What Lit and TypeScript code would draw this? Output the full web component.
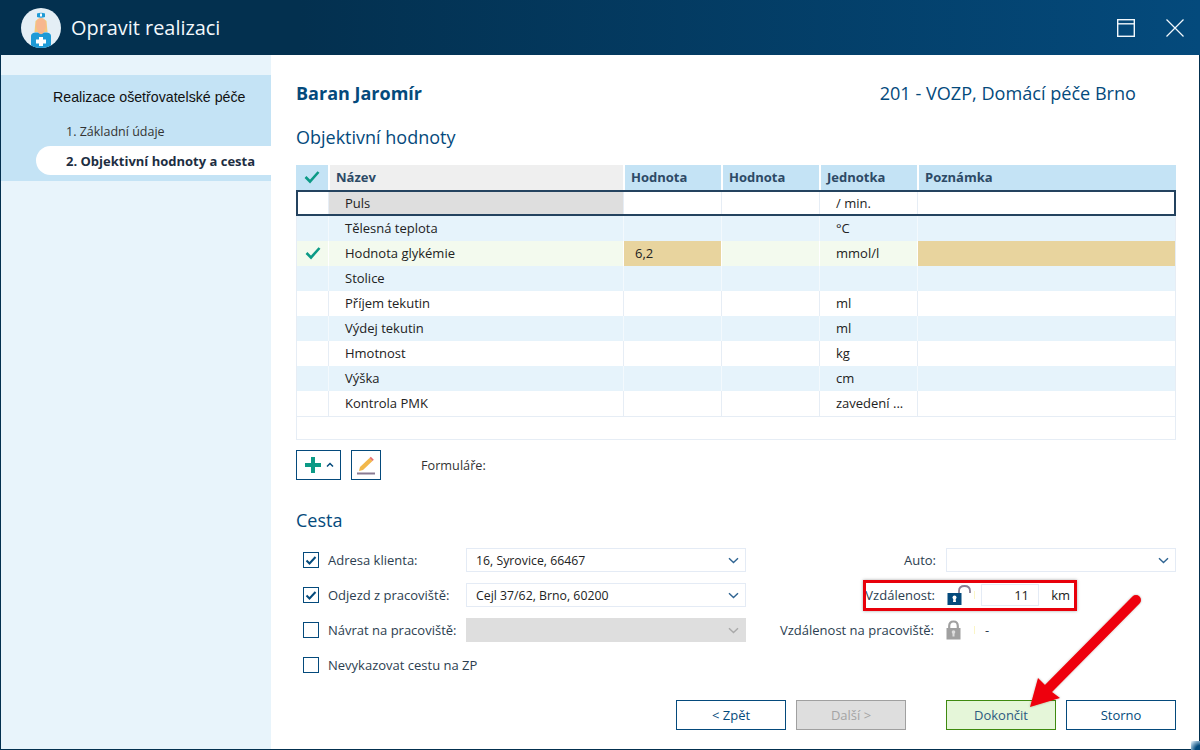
import { LitElement, html, css } from "lit";
import { customElement } from "lit/decorators.js";

const rows = [
  { n: "Puls", u: "/ min.", cls: "focus" },
  { n: "Tělesná teplota", u: "°C", cls: "alt" },
  { n: "Hodnota glykémie", u: "mmol/l", cls: "ok", v: "6,2" },
  { n: "Stolice", u: "", cls: "alt" },
  { n: "Příjem tekutin", u: "ml", cls: "" },
  { n: "Výdej tekutin", u: "ml", cls: "alt" },
  { n: "Hmotnost", u: "kg", cls: "" },
  { n: "Výška", u: "cm", cls: "alt" },
  { n: "Kontrola PMK", u: "zavedení ...", cls: "" },
];

const check = (c: string) => html`<svg class="tick" width="16" height="14" viewBox="0 0 16 14"><path d="M1.5 7 L6 11.5 L14.5 2" fill="none" stroke="${c}" stroke-width="2.6"/></svg>`;
const chev = (c = "#2f6492") => html`<svg class="chev" width="11" height="7" viewBox="0 0 11 7"><path d="M1 1.2 L5.5 5.6 L10 1.2" fill="none" stroke="${c}" stroke-width="1.4"/></svg>`;
const box = (on: boolean) => html`<span class="cb">${on ? html`<svg width="14" height="12" viewBox="0 0 14 12"><path d="M2.5 6.5 L5.5 9.5 L11.5 3" fill="none" stroke="#044a7c" stroke-width="2"/></svg>` : ""}</span>`;

@customElement("app-root")
export class AppRoot extends LitElement {
  static styles = css`
    :host { display: block; width: 1200px; height: 750px; font-family: "Open Sans", sans-serif; font-size: 13px; color: #2c3e50; position: relative; overflow: hidden; background: #fff; }
    .win { height: 750px; display: flex; flex-direction: column; box-sizing: border-box; border: 1px solid #03304f; border-top: 0; }
    .head { height: 55px; margin: 0 -1px; flex: none; background: linear-gradient(90deg, #03304f 0%, #03304f 25%, #044a7c 100%); display: flex; align-items: center; padding: 0 16px 0 21px; color: #fff; }
    .avatar { width: 40px; height: 40px; flex: none; }
    .head h1 { font-size: 19.9px; font-weight: 400; margin: 0 0 0 10px; flex: 1; color: #f2f8fc; }
    .head svg.wbtn { display: block; }
    .wbtns { display: flex; gap: 31px; align-items: center; }
    .body { flex: 1; display: flex; min-height: 0; }
    .side { width: 270px; flex: none; background: #e8f4fb; padding-top: 20px; box-sizing: border-box; }
    .sect { background: #c4e3f5; height: 106px; padding-top: 12px; box-sizing: border-box; }
    .sect .t { font-family: "Liberation Sans", sans-serif; font-size: 14.2px; color: #111; margin-left: 52px; line-height: 20px; }
    .sect .s1 { margin: 15px 0 0 65px; font-size: 12.5px; line-height: 20px; color: #333; }
    .sect .s2 { margin: 4px 0 0 35px; height: 29px; line-height: 31px; padding-left: 30px; background: #fff; border-radius: 15px 0 0 15px; font-size: 13px; font-weight: 700; color: #1d2e42; }
    .main { flex: 1; padding: 0 23px 0 25px; display: flex; flex-direction: column; min-width: 0; }
    .top { display: flex; justify-content: space-between; margin-top: 25px; height: 26px; align-items: center; padding-right: 40px; }
    .name { font-size: 18px; font-weight: 700; color: #044a7c; }
    .ins { font-size: 18.1px; color: #044a7c; }
    h2 { font-size: 18px; font-weight: 400; color: #044a7c; margin: 0; line-height: 26px; }
    .h-obj { margin-top: 18px; }
    .grid { margin-top: 15px; height: 275px; border: 1px solid #e6edf5; border-top: 0; box-sizing: border-box; width: 880px; }
    .r { display: grid; grid-template-columns: 31px 295px 98px 98px 98px 1fr; height: 25px; align-items: stretch; box-sizing: border-box; position: relative; }
    .r > div { display: flex; align-items: center; padding-left: 7px; padding-bottom: 1px; border-left: 1px solid #e6edf5; box-sizing: border-box; color: #222; font-size: 13px; white-space: nowrap; }
    .r > div:first-child { border-left: 0; padding-left: 0; justify-content: center; }
    .r .nm { padding-left: 16px; }
    .r .val { padding-left: 11px; }
    .r.hd { margin: 0 -1px; grid-template-columns: 32px 295px 98px 98px 98px 1fr; background: #c4e3f5; }
    .r.hd > div { border-left: 2px solid #fff; font-weight: 700; color: #2d4a66; font-size: 13px; padding-left: 6px; }
    .r.hd > div:first-child { border-left: 0; padding-left: 0; }
    .r.hd .nm { background: #efefef; padding-left: 6px; }
    .r.alt { background: #e6f3fb; }
    .r.alt > div { border-left-color: #f3f9fd; }
    .r.ok { background: #f3faee; }
    .r.ok > div { border-left-color: #fff; }
    .r.focus { height: 26px; margin: 0 -1px; outline: 2px solid #24435f; outline-offset: -2px; grid-template-columns: 32px 295px 98px 98px 98px 1fr; z-index: 1; }
    .r.focus > div { padding-bottom: 0; }
    .r.focus .nm.name-cell { background: #dedede; margin: 2px 0; }
    .r .fill { background: #e8d49e; }
    .r.plain { border-top: 1px solid #e6edf5; height: 24px; }
    .tools { display: flex; align-items: center; margin-top: 10px; height: 30px; }
    .tb { border: 1px solid #044a7c; height: 30px; box-sizing: border-box; display: flex; align-items: center; justify-content: center; }
    .tb.add { width: 45px; gap: 4px; padding-left: 1px; }
    .tb.edit { width: 30px; margin-left: 10px; }
    .forms { margin-left: 40px; color: #333; font-size: 12.7px; }
    .h-cesta { margin-top: 27px; }
    .form { display: grid; grid-template-columns: 163px 280px 1fr; margin-top: 15px; margin-left: 7px; row-gap: 11px; }
    .lbl { display: flex; align-items: center; color: #2c3e50; font-size: 13px; gap: 9px; height: 24px; white-space: nowrap; }
    .cb { width: 14px; height: 14px; border: 1px solid #044a7c; flex: none; display: flex; align-items: center; justify-content: center; }
    .sel { width: 280px; height: 24px; box-sizing: border-box; border: 1px solid #e4ebf5; display: flex; align-items: center; justify-content: space-between; padding: 0 6px 0 9px; color: #222; font-size: 12.3px; background: #fff; }
    .sel.off { background: #dedede; border-color: #dedede; }
    .rt { display: flex; align-items: center; height: 24px; font-size: 13px; color: #2c3e50; justify-content: flex-end; }
    .rt .sel { width: 230px; }
    .rt .lab { margin-right: 10px; }
    .mark { width: 1px; height: 8px; background: #fbf6c6; flex: none; }
    .lockrow { padding-right: 106px; }
    .lockrow .lock { margin-left: 12px; }
    .lockrow .mark { margin-left: 3px; }
    .tb-num { width: 58px; height: 22px; box-sizing: border-box; border: 1px solid #e4ebf5; text-align: right; padding-right: 9px; line-height: 20px; color: #222; margin-left: 6px; }
    .km { width: 31px; text-align: right; color: #222; }
    .lockrow2 { justify-content: flex-start; margin-left: 34px; }
    .lock2 { margin-left: 12px; }
    .lockrow2 .mark { margin-left: 13px; }
    .dash { margin-left: 10px; }
    .wide { grid-column: 1 / span 2; }
    .actions { display: flex; margin-top: 23px; justify-content: flex-end; }
    .btn { width: 110px; height: 30px; box-sizing: border-box; border: 1px solid #044a7c; display: flex; align-items: center; justify-content: center; color: #044a7c; font-size: 13px; margin-left: 10px; background: #fff; }
    .btn.dis { background: #dedede; border-color: #a0a0a0; color: #a4a4a4; }
    .btn.go { background: #e5f6d9; border-color: #3f8a10; margin-left: 40px; color: #2d5a80; }
    .hl { position: absolute; left: 863px; top: 580px; width: 214px; height: 31px; box-sizing: border-box; border: 3px solid #e8000a; box-shadow: 0 0 3px rgba(0,0,0,.35); pointer-events: none; }
    .arrow { position: absolute; left: 0; top: 0; pointer-events: none; }
    .corner { position: absolute; right: 0; bottom: 0; width: 9px; height: 9px; background: radial-gradient(circle at 100% 100%, #044a7c 0 35%, #a8c8de 80%, transparent 100%); }
  `;

  private avatar() {
    return html`<svg class="avatar" viewBox="0 0 40 40">
      <defs><clipPath id="av"><circle cx="20" cy="20" r="20"/></clipPath></defs>
      <circle cx="20" cy="20" r="20" fill="#e4eef5"/>
      <g clip-path="url(#av)">
        <path d="M14.5 13 Q20 7 25.5 13 L26.5 24 L13.5 24 Z" fill="#f4c87c"/>
        <path d="M10 40 V28 Q10 25 14 24.5 L26 24.5 Q30 25 30 28 V40 Z" fill="#1e9ad6"/>
        <path d="M17 20 H23 V24.5 Q20 28 17 24.5 Z" fill="#f5b48e"/>
        <ellipse cx="20" cy="17" rx="5" ry="7" fill="#f7b78f"/>
        <path d="M16 5.5 Q20 4 24 5.5 V9 Q20 10.5 16 9 Z" fill="#1e9ad6"/>
        <rect x="19" y="5.5" width="2" height="3" fill="#fff"/>
        <rect x="18" y="29" width="4" height="9" fill="#fff"/>
        <rect x="15" y="31.5" width="10" height="4" fill="#fff"/>
      </g>
    </svg>`;
  }

  render() {
    return html`
      <div class="win">
        <div class="head">
          ${this.avatar()}
          <h1>Opravit realizaci</h1>
          <div class="wbtns">
            <svg class="wbtn" width="18" height="18" viewBox="0 0 18 18"><rect x="0.7" y="0.7" width="16.6" height="16.6" fill="none" stroke="#f2f8fc" stroke-width="1.4"/><path d="M1 4.8 H17" stroke="#f2f8fc" stroke-width="1.4"/></svg>
            <svg class="wbtn" width="18" height="18" viewBox="0 0 18 18"><path d="M0.5 0.5 L17.5 17.5 M17.5 0.5 L0.5 17.5" stroke="#f2f8fc" stroke-width="1.2"/></svg>
          </div>
        </div>
        <div class="body">
          <div class="side">
            <div class="sect">
              <div class="t">Realizace ošetřovatelské péče</div>
              <div class="s1">1. Základní údaje</div>
              <div class="s2">2. Objektivní hodnoty a cesta</div>
            </div>
          </div>
          <div class="main">
            <div class="top"><span class="name">Baran Jaromír</span><span class="ins">201 - VOZP, Domácí péče Brno</span></div>
            <h2 class="h-obj">Objektivní hodnoty</h2>
            <div class="grid">
              <div class="r hd">
                <div>${check("#0c9a86")}</div><div class="nm">Název</div><div>Hodnota</div><div>Hodnota</div><div>Jednotka</div><div>Poznámka</div>
              </div>
              ${rows.map((r) => html`
                <div class="r ${r.cls}">
                  <div>${r.cls === "ok" ? check("#0c9a86") : ""}</div>
                  <div class="nm name-cell">${r.n}</div>
                  <div class="${r.v ? "fill val" : ""}">${r.v ?? ""}</div>
                  <div></div>
                  <div class="nm">${r.u}</div>
                  <div class="${r.v ? "fill" : ""}"></div>
                </div>`)}
              <div class="r plain"></div>
            </div>
            <div class="tools">
              <div class="tb add">
                <svg width="18" height="18" viewBox="0 0 18 18"><path d="M9 1 V17 M1 9 H17" stroke="#0c9a86" stroke-width="4"/></svg>
                <svg width="8" height="6" viewBox="0 0 8 6"><path d="M1 4.5 L4 1.5 L7 4.5" fill="none" stroke="#044a7c" stroke-width="1.5"/></svg>
              </div>
              <div class="tb edit">
                <svg width="22" height="20" viewBox="0 0 22 20"><path d="M5 12 L14.5 3 L17.5 6 L8 15 L4 16 Z" fill="#f2b84b"/><path d="M14.5 3 L15.8 1.8 L18.8 4.8 L17.5 6 Z" fill="#e86f6f"/><rect x="2" y="17.5" width="18" height="2" fill="#8a7a92"/></svg>
              </div>
              <div class="forms">Formuláře:</div>
            </div>
            <h2 class="h-cesta">Cesta</h2>
            <div class="form">
              <div class="lbl">${box(true)}Adresa klienta:</div>
              <div class="sel">16, Syrovice, 66467 ${chev()}</div>
              <div class="rt"><span class="lab">Auto:</span><div class="sel"><span></span>${chev()}</div></div>

              <div class="lbl">${box(true)}Odjezd z pracoviště:</div>
              <div class="sel">Cejl 37/62, Brno, 60200 ${chev()}</div>
              <div class="rt lockrow">
                <span>Vzdálenost:</span>
                <svg class="lock" width="24" height="22" viewBox="0 0 24 22"><path d="M12 10 V7 Q12 2 17.5 2 Q23 2 23 7 V9" fill="none" stroke="#8a7f94" stroke-width="1.8"/><rect x="0.5" y="9" width="14" height="12" fill="#044a7c"/><circle cx="7.5" cy="13.5" r="2" fill="#fff"/><path d="M6.5 14 H8.5 L9 18 H6 Z" fill="#fff"/></svg>
                <span class="mark"></span>
                <div class="tb-num">11</div>
                <div class="km">km</div>
              </div>

              <div class="lbl">${box(false)}Návrat na pracoviště:</div>
              <div class="sel off"><span></span>${chev("#a9a9a9")}</div>
              <div class="rt lockrow2">
                <span>Vzdálenost na pracoviště:</span>
                <svg class="lock2" width="15" height="20" viewBox="0 0 15 20"><path d="M3.2 9 V6 Q3.2 1.5 7.5 1.5 Q11.8 1.5 11.8 6 V9" fill="none" stroke="#a0a0a0" stroke-width="2.2"/><rect x="0.5" y="8" width="14" height="11.5" fill="#a0a0a0"/><circle cx="7.5" cy="12" r="1.8" fill="#ddd"/><rect x="6.5" y="12.5" width="2" height="4" fill="#ddd"/></svg>
                <span class="mark"></span>
                <span class="dash">-</span>
              </div>

              <div class="lbl wide">${box(false)}Nevykazovat cestu na ZP</div>
            </div>
            <div class="actions">
              <div class="btn">&lt; Zpět</div>
              <div class="btn dis">Další &gt;</div>
              <div class="btn go">Dokončit</div>
              <div class="btn">Storno</div>
            </div>
          </div>
        </div>
      </div>
      <div class="hl"></div>
      <svg class="arrow" width="1200" height="750" viewBox="0 0 1200 750">
        <defs><filter id="sh" x="-20%" y="-20%" width="140%" height="140%"><feDropShadow dx="0" dy="0" stdDeviation="1.2" flood-color="#000" flood-opacity=".3"/></filter></defs>
        <g filter="url(#sh)">
          <path d="M1136 600 L1046 691" stroke="#ee0008" stroke-width="10" stroke-linecap="round" fill="none"/>
          <path d="M1030 707 L1038 678 L1046 686 L1052 692 L1060 698 Z" fill="#ee0008"/>
        </g>
      </svg>
      <div class="corner"></div>
    `;
  }
}
